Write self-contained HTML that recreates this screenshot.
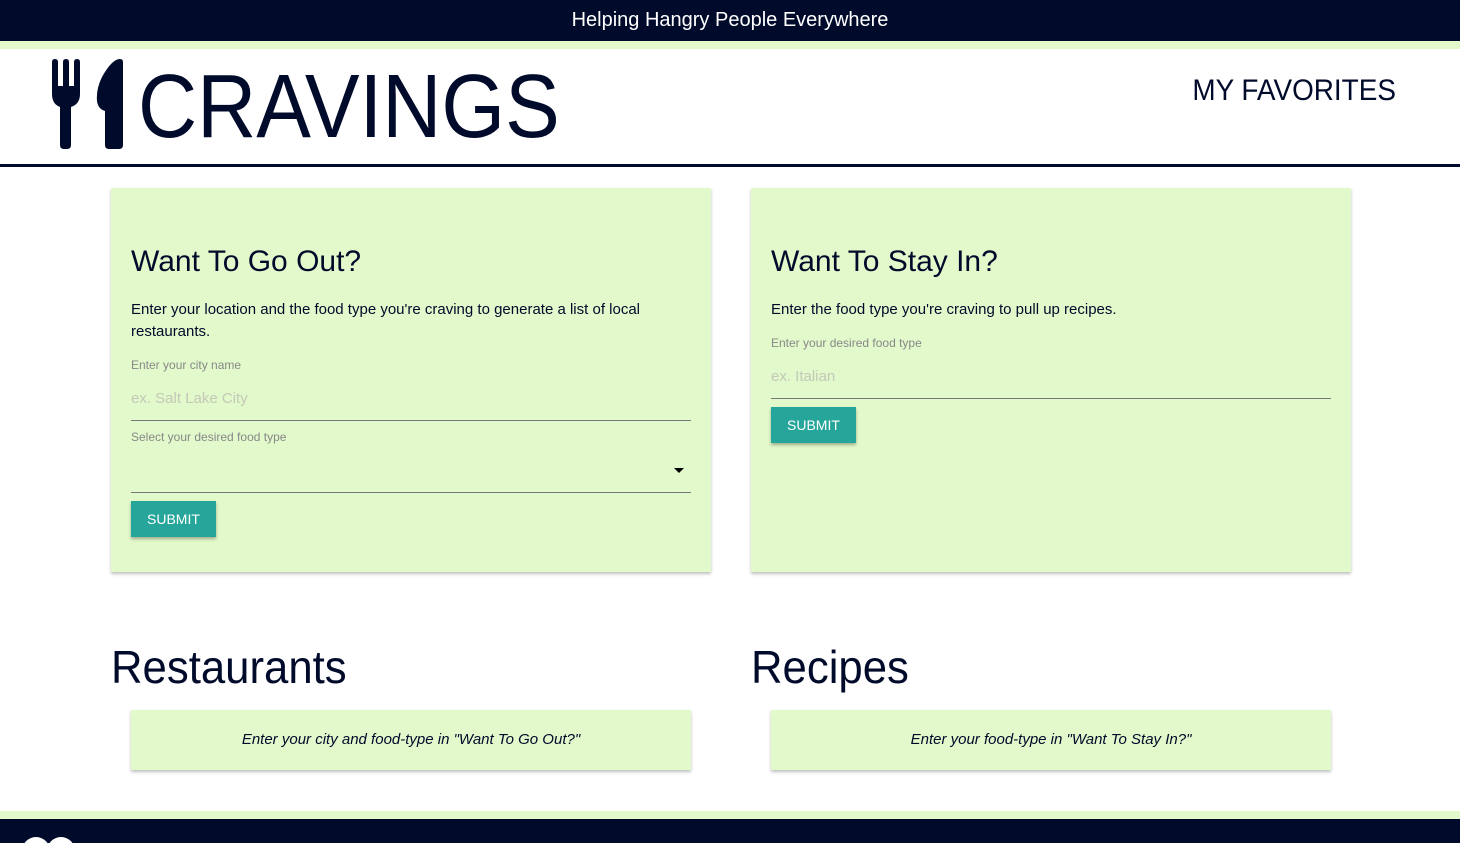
<!DOCTYPE html>
<html><head><style>
*{margin:0;padding:0;box-sizing:border-box}
body{width:1460px;height:843px;overflow:hidden;background:#fff;font-family:"Liberation Sans",sans-serif;color:#000a2a;position:relative}
.top{position:absolute;left:0;top:0;width:1460px;height:41px;background:#000a2a;color:#fff;font-size:20px;text-align:center;line-height:41px}
.stripe{position:absolute;left:0;width:1460px;background:#e2f9cb}
.logo{position:absolute;left:138px;top:56px;font-size:90px;font-weight:300;letter-spacing:0;color:#000a2a;transform:scaleX(0.91);transform-origin:left}
.fav{position:absolute;right:64px;top:74px;font-size:30px;transform:scaleX(0.93);transform-origin:right}
.line{position:absolute;left:0;top:164px;width:1460px;height:3px;background:#000a2a}
.card{position:absolute;top:188px;width:600px;height:384px;background:#e2f9cb;box-shadow:0 2px 3px rgba(0,0,0,.25);padding:0 20px}
.card h2{font-weight:normal;font-size:30px;margin-top:57px}
.card p{font-size:15px;line-height:22px;margin-top:20px}
.lbl{font-size:12px;color:#888;position:absolute;left:20px}
.ph{font-size:15px;color:#c4c8b8;position:absolute;left:20px}
.ul{position:absolute;left:20px;width:560px;height:1px;background:#777}
.btn{position:absolute;left:20px;background:#26a69a;color:#fff;font-size:14px;padding:0 16px;height:36px;line-height:36px;box-shadow:0 2px 3px rgba(0,0,0,.3)}
h1{position:absolute;font-weight:normal;font-size:46px;top:640px;transform:scaleX(0.95);transform-origin:left}
.res{position:absolute;top:710px;width:560px;height:60px;background:#e2f9cb;box-shadow:0 2px 3px rgba(0,0,0,.25);font-style:italic;font-size:15px;text-align:center;line-height:60px}
.foot{position:absolute;left:0;top:819px;width:1460px;height:24px;background:#000a2a}
</style></head><body>
<div class="top">Helping Hangry People Everywhere</div>
<div class="stripe" style="top:41px;height:8px"></div>
<svg style="position:absolute;left:50px;top:58px" width="76" height="92" viewBox="0 0 76 92">
<path fill="#000a2a" d="M2 4q0-3 3-3t3 3v24h5V4q0-3 3-3t3 3v24h5V4q0-3 3-3t3 3v32q0 10-9 13v38q0 4-4 4h-3q-4 0-4-4V49Q2 46 2 36z"/>
<path fill="#000a2a" d="M73 4q0-3-3-3-8 0-18 18-6 12-5 24 1 8 8 10v34q0 4 4 4h10q4 0 4-4z"/>
</svg>
<div class="logo">CRAVINGS</div>
<div class="fav">MY FAVORITES</div>
<div class="line"></div>

<div class="card" style="left:111px">
<h2>Want To Go Out?</h2>
<p>Enter your location and the food type you're craving to generate a list of local restaurants.</p>
<div class="lbl" style="top:170px">Enter your city name</div>
<div class="ph" style="top:202px">ex. Salt Lake City</div>
<div class="ul" style="top:232px"></div>
<div class="lbl" style="top:242px">Select your desired food type</div>
<div style="position:absolute;left:563px;top:280px;border-left:5px solid transparent;border-right:5px solid transparent;border-top:5px solid #000"></div>
<div class="ul" style="top:304px"></div>
<div class="btn" style="top:313px">SUBMIT</div>
</div>

<div class="card" style="left:751px">
<h2>Want To Stay In?</h2>
<p>Enter the food type you're craving to pull up recipes.</p>
<div class="lbl" style="top:148px">Enter your desired food type</div>
<div class="ph" style="top:180px">ex. Italian</div>
<div class="ul" style="top:210px"></div>
<div class="btn" style="top:219px">SUBMIT</div>
</div>

<h1 style="left:111px">Restaurants</h1>
<h1 style="left:751px">Recipes</h1>
<div class="res" style="left:131px">Enter your city and food-type in "Want To Go Out?"</div>
<div class="res" style="left:771px">Enter your food-type in "Want To Stay In?"</div>

<div class="stripe" style="top:811px;height:8px"></div>
<div class="foot"></div>
<div style="position:absolute;left:22px;top:837px;width:28px;height:28px;border-radius:50%;background:#fff"></div>
<div style="position:absolute;left:47px;top:837px;width:28px;height:28px;border-radius:50%;background:#fff"></div>
</body></html>
